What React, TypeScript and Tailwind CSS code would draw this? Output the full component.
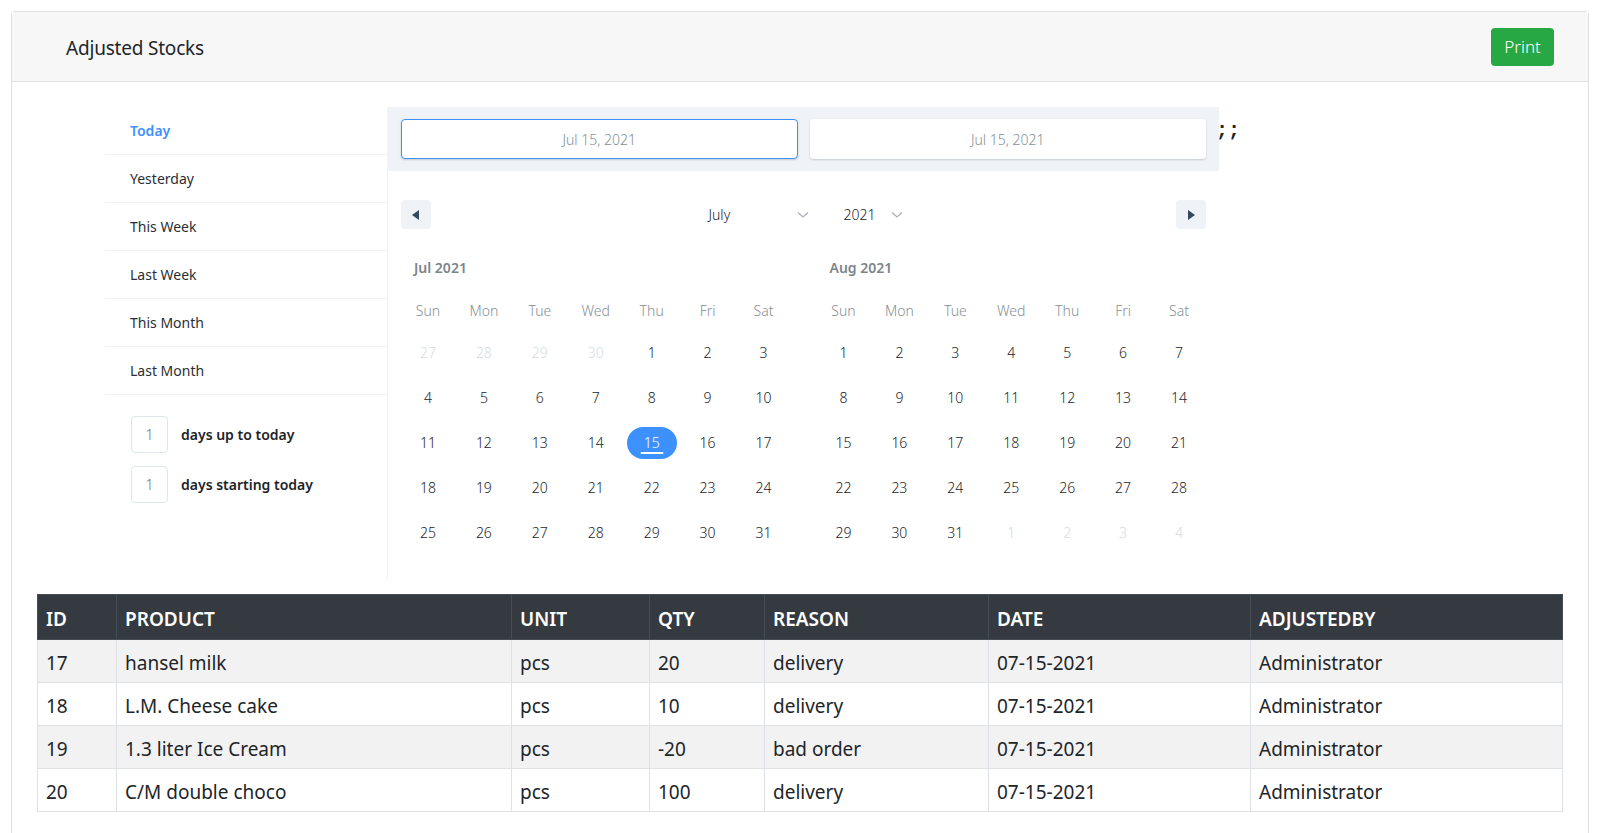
import React from 'react';

type Row = {
  id: number;
  product: string;
  unit: string;
  qty: number;
  reason: string;
  date: string;
  by: string;
};

const rows: Row[] = [
  { id: 17, product: 'hansel milk', unit: 'pcs', qty: 20, reason: 'delivery', date: '07-15-2021', by: 'Administrator' },
  { id: 18, product: 'L.M. Cheese cake', unit: 'pcs', qty: 10, reason: 'delivery', date: '07-15-2021', by: 'Administrator' },
  { id: 19, product: '1.3 liter Ice Cream', unit: 'pcs', qty: -20, reason: 'bad order', date: '07-15-2021', by: 'Administrator' },
  { id: 20, product: 'C/M double choco', unit: 'pcs', qty: 100, reason: 'delivery', date: '07-15-2021', by: 'Administrator' },
];

const staticRanges = ['Today', 'Yesterday', 'This Week', 'Last Week', 'This Month', 'Last Month'];
const weekDays = ['Sun', 'Mon', 'Tue', 'Wed', 'Thu', 'Fri', 'Sat'];

type Day = { n: number; passive?: boolean; selected?: boolean };

function buildMonth(startOffset: number, prevMonthDays: number, days: number): Day[] {
  const list: Day[] = [];
  for (let i = startOffset - 1; i >= 0; i--) list.push({ n: prevMonthDays - i, passive: true });
  for (let d = 1; d <= days; d++) list.push({ n: d });
  let next = 1;
  while (list.length % 7 !== 0) list.push({ n: next++, passive: true });
  return list;
}

const july = buildMonth(4, 30, 31).map((d) => (!d.passive && d.n === 15 ? { ...d, selected: true } : d));
const august = buildMonth(0, 31, 31);

function Chevron() {
  return (
    <svg width="12" height="8" viewBox="0 0 12 8" fill="none">
      <path d="M1 1.5 L6 6 L11 1.5" stroke="#a9b0b6" strokeWidth="1.3" />
    </svg>
  );
}

function Month({ title, days }: { title: string; days: Day[] }) {
  return (
    <div className="flex-1 px-[12px]">
      <div className="mt-[28px] h-[22px] pl-[14px] text-[14px] font-semibold leading-[22px] text-[#7c858b]">{title}</div>
      <div className="mt-[11px] grid h-[40px] grid-cols-7 items-center">
        {weekDays.map((w) => (
          <div key={w} className="text-center text-[14px] font-light text-[#849095]">
            {w}
          </div>
        ))}
      </div>
      <div className="grid grid-cols-7">
        {days.map((d, i) => (
          <div key={i} className="flex h-[45px] items-center justify-center">
            {d.selected ? (
              <div className="relative flex h-[32px] w-[50px] items-center justify-center rounded-full bg-[#3d91ff] text-[14px] font-light text-white">
                {d.n}
                <span className="absolute bottom-[5px] left-1/2 h-[2px] w-[23px] -translate-x-1/2 rounded bg-white" />
              </div>
            ) : (
              <span className={`text-[14px] font-light ${d.passive ? 'text-[#d5dce0]' : 'text-[#1d2429]'}`}>{d.n}</span>
            )}
          </div>
        ))}
      </div>
    </div>
  );
}

export default function App() {
  return (
    <div className="min-h-screen bg-white pl-[11px] pr-[18px] pt-[11px] font-['Noto_Sans',sans-serif] text-[#212529]">
      <div className="rounded-[4px] border border-[#dfdfdf]">
        <div className="flex h-[70px] items-center justify-between border-b border-[#dfdfdf] bg-[#f7f7f7] pl-[54px] pr-[34px]">
          <h1 className="pt-[3px] text-[19px] font-normal tracking-[-0.2px]">Adjusted Stocks</h1>
          <button className="h-[38px] w-[63px] rounded-[4px] bg-[#28a745] text-[17px] font-light text-white">Print</button>
        </div>

        <div className="px-[25px] pb-[30px] pt-[25px]">
          <div className="flex pl-[68px]">
            {/* defined ranges */}
            <div className="w-[283px] border-r border-[#eff2f7]">
              {staticRanges.map((r, i) => (
                <div
                  key={r}
                  className={`flex h-[48px] items-center border-b border-[#eff2f7] pl-[25px] text-[14px] ${
                    i === 0 ? 'font-semibold text-[#3d91ff]' : 'text-[#2b2f33]'
                  }`}
                >
                  {r}
                </div>
              ))}
              <div className="flex flex-col gap-[13px] pl-[26px] pt-[21px]">
                {['days up to today', 'days starting today'].map((t) => (
                  <div key={t} className="flex items-center">
                    <div className="flex h-[37px] w-[37px] items-center justify-center rounded-[4px] border border-[#dee7eb] text-[14px] font-light text-[#6b7378]">
                      1
                    </div>
                    <span className="ml-[13px] text-[14px] font-semibold text-[#1d2429]">{t}</span>
                  </div>
                ))}
              </div>
            </div>

            {/* calendar */}
            <div className="w-[831px] pb-[25px]">
              <div className="flex gap-[12px] bg-[#eff2f7] px-[13px] py-[12px]">
                <div className="flex h-[40px] flex-1 items-center justify-center rounded-[4px] border border-[#3d91ff] bg-white text-[14px] font-light text-[#849095] shadow-[0_1px_2px_rgba(35,57,66,0.21)]">
                  Jul 15, 2021
                </div>
                <div className="flex h-[40px] flex-1 items-center justify-center rounded-[4px] border border-transparent bg-white text-[14px] font-light text-[#849095] shadow-[0_1px_2px_rgba(35,57,66,0.21)]">
                  Jul 15, 2021
                </div>
              </div>

              <div className="flex items-center px-[13px] pt-[29px]">
                <button className="flex h-[29px] w-[30px] items-center justify-center rounded-[4px] bg-[#eff2f7]">
                  <svg width="8" height="10" viewBox="0 0 8 10">
                    <path d="M7 0 L0 5 L7 10 Z" fill="#34495e" />
                  </svg>
                </button>
                <div className="flex flex-1 items-center justify-center gap-[11px] pl-[4px]">
                  <div className="flex w-[125px] items-center justify-between pl-[11px] pr-[14px] text-[14px] font-light text-[#1d2429]">
                    July
                    <Chevron />
                  </div>
                  <div className="flex w-[80px] items-center justify-between pl-[10px] pr-[11px] text-[14px] font-light text-[#1d2429]">
                    2021
                    <Chevron />
                  </div>
                </div>
                <button className="flex h-[29px] w-[30px] items-center justify-center rounded-[4px] bg-[#eff2f7]">
                  <svg width="8" height="10" viewBox="0 0 8 10">
                    <path d="M1 0 L8 5 L1 10 Z" fill="#34495e" />
                  </svg>
                </button>
              </div>

              <div className="flex">
                <Month title="Jul 2021" days={july} />
                <Month title="Aug 2021" days={august} />
              </div>
            </div>

            <span className="ml-[-3px] mt-[12px] font-['Liberation_Mono',monospace] text-[20px] font-bold leading-[24px]">;;</span>
          </div>

          <table className="mt-[14px] w-full border-collapse text-[19px]">
            <thead>
              <tr className="bg-[#343a40] text-white">
                <th className="h-[45px] w-[79px] border border-[#454d55] px-[8px] pt-[5px] text-left font-semibold">ID</th>
                <th className="w-[395px] border border-[#454d55] px-[8px] pt-[5px] text-left font-semibold">PRODUCT</th>
                <th className="w-[138px] border border-[#454d55] px-[8px] pt-[5px] text-left font-semibold">UNIT</th>
                <th className="w-[115px] border border-[#454d55] px-[8px] pt-[5px] text-left font-semibold">QTY</th>
                <th className="w-[224px] border border-[#454d55] px-[8px] pt-[5px] text-left font-semibold">REASON</th>
                <th className="w-[262px] border border-[#454d55] px-[8px] pt-[5px] text-left font-semibold">DATE</th>
                <th className="border border-[#454d55] px-[8px] pt-[5px] text-left font-semibold">ADJUSTEDBY</th>
              </tr>
            </thead>
            <tbody>
              {rows.map((r, i) => (
                <tr key={r.id} className={i % 2 === 0 ? 'bg-[#f2f2f2]' : 'bg-white'}>
                  <td className="h-[43px] border border-[#dee2e6] px-[8px] pt-[5px]">{r.id}</td>
                  <td className="border border-[#dee2e6] px-[8px] pt-[5px]">{r.product}</td>
                  <td className="border border-[#dee2e6] px-[8px] pt-[5px]">{r.unit}</td>
                  <td className="border border-[#dee2e6] px-[8px] pt-[5px]">{r.qty}</td>
                  <td className="border border-[#dee2e6] px-[8px] pt-[5px]">{r.reason}</td>
                  <td className="border border-[#dee2e6] px-[8px] pt-[5px]">{r.date}</td>
                  <td className="border border-[#dee2e6] px-[8px] pt-[5px]">{r.by}</td>
                </tr>
              ))}
            </tbody>
          </table>
        </div>
      </div>
    </div>
  );
}
